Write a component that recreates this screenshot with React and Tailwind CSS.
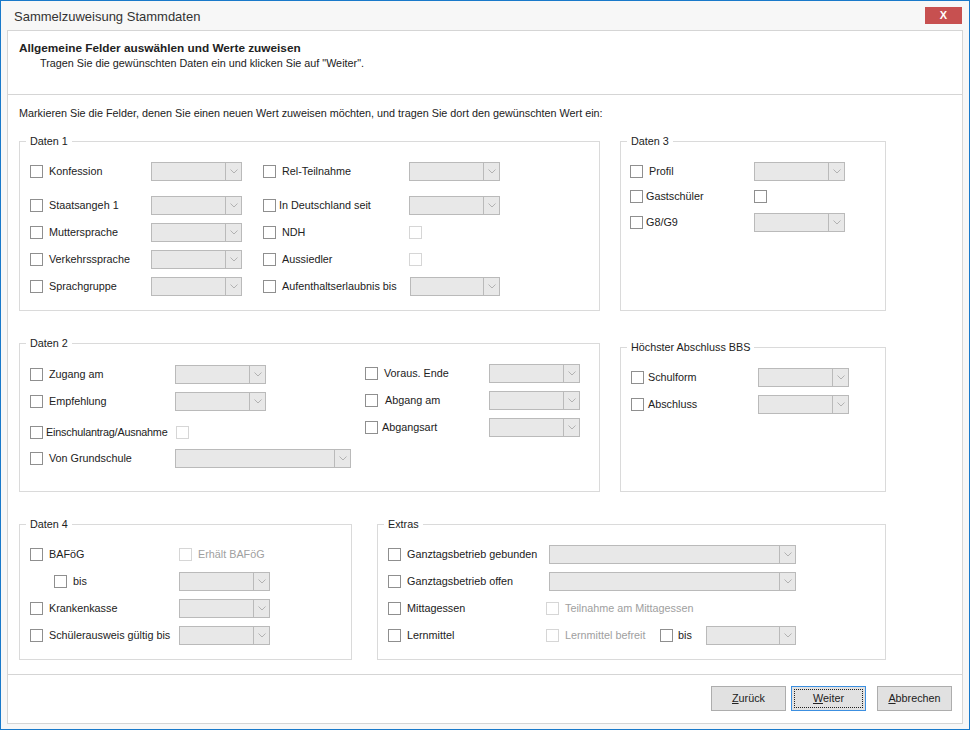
import React from "react";

function Check({ disabled, className = "" }) {
  return (
    <span
      className={`block w-[13px] h-[13px] shrink-0 bg-white border ${
        disabled ? "border-[#d6d6d6]" : "border-[#8f8f8f]"
      } ${className}`}
    />
  );
}

function Combo({ w = "w-[91px]" }) {
  return (
    <div className={`${w} h-[19px] flex shrink-0 border border-[#bababa] bg-[#e8e8e8]`}>
      <div className="flex-1" />
      <div className="w-[16px] border-l border-[#bababa] flex items-center justify-center">
        <svg width="8" height="5" viewBox="0 0 8 5">
          <path d="M0.5 0.5L4 4L7.5 0.5" fill="none" stroke="#b2b2b2" strokeWidth="1" />
        </svg>
      </div>
    </div>
  );
}

// checkbox + label, in a cell of fixed width so the next control lines up
function Field({ w = "", label, gap = "ml-[6px]", disabled }) {
  return (
    <div className={`${w} shrink-0 flex items-center`}>
      <Check disabled={disabled} />
      <span className={`${gap} whitespace-nowrap ${disabled ? "text-[#a0a0a0]" : "text-[#222]"}`}>
        {label}
      </span>
    </div>
  );
}

function Group({ title, className = "", bodyClassName = "", children }) {
  return (
    <div className={`border border-[#dadada] ${className}`}>
      <div className="-mt-[8px] ml-[6px] w-fit px-[4px] bg-white leading-[15px] text-[#222]">{title}</div>
      <div className={bodyClassName}>{children}</div>
    </div>
  );
}

function Row({ className = "", children }) {
  return <div className={`flex items-center h-[19px] ${className}`}>{children}</div>;
}

function Button({ first, rest, focused }) {
  return (
    <div
      className={`w-[75px] h-[25px] p-[2px] bg-[#e1e1e1] border ${
        focused ? "border-[#3c8fe0]" : "border-[#adadad]"
      }`}
    >
      <div
        className={`h-full flex items-center justify-center text-[#222] ${
          focused ? "border border-dotted border-[#222]" : ""
        }`}
      >
        <span>
          <span className="underline">{first}</span>
          {rest}
        </span>
      </div>
    </div>
  );
}

export default function App() {
  return (
    <div className="w-[970px] h-[730px] border border-[#1979ca] bg-[#f7f7f7] flex flex-col font-['Liberation_Sans',Arial,sans-serif] text-[10.8px] leading-[15px]">
      {/* Title bar */}
      <div className="h-[29px] flex items-start shrink-0">
        <div className="pl-[13px] pt-[7px] text-[13px] text-[#333] leading-[17px]">Sammelzuweisung Stammdaten</div>
        <div className="ml-auto mt-[6px] mr-[7px] w-[37px] h-[17px] bg-[#c75050] flex items-center justify-center text-white font-bold text-[11px]">
          X
        </div>
      </div>

      {/* Panel */}
      <div className="mx-[6px] h-[694px] bg-white border border-[#d5d5d5] flex flex-col">
        {/* Header */}
        <div className="h-[64px] shrink-0 border-b border-[#d5d5d5] pl-[11px] pt-[10px]">
          <div className="font-bold text-[11.8px] text-[#222]">Allgemeine Felder auswählen und Werte zuweisen</div>
          <div className="ml-[21px] text-[#222]">Tragen Sie die gewünschten Daten ein und klicken Sie auf "Weiter".</div>
        </div>

        {/* Body */}
        <div className="flex-1 pl-[11px] pt-[11px]">
          <div className="text-[#222]">
            Markieren Sie die Felder, denen Sie einen neuen Wert zuweisen möchten, und tragen Sie dort den gewünschten Wert ein:
          </div>

          {/* Daten 1 / Daten 3 */}
          <div className="flex items-stretch gap-[20px] mt-[20px]">
            <Group title="Daten 1" className="w-[581px]" bodyClassName="pl-[10px] pb-[14px]">
              <Row className="mt-[13px]">
                <Field w="w-[121px]" label="Konfession" />
                <Combo />
                <Field w="w-[146px] ml-[21px]" label="Rel-Teilnahme" />
                <Combo />
              </Row>
              <Row className="mt-[15px]">
                <Field w="w-[121px]" label="Staatsangeh 1" />
                <Combo />
                <Field w="w-[146px] ml-[21px]" label="In Deutschland seit" gap="ml-[3px]" />
                <Combo />
              </Row>
              <Row className="mt-[8px]">
                <Field w="w-[121px]" label="Muttersprache" />
                <Combo />
                <Field w="w-[146px] ml-[21px]" label="NDH" />
                <Check disabled />
              </Row>
              <Row className="mt-[8px]">
                <Field w="w-[121px]" label="Verkehrssprache" />
                <Combo />
                <Field w="w-[146px] ml-[21px]" label="Aussiedler" />
                <Check disabled />
              </Row>
              <Row className="mt-[8px]">
                <Field w="w-[121px]" label="Sprachgruppe" />
                <Combo />
                <Field w="w-[147px] ml-[21px]" label="Aufenthaltserlaubnis bis" />
                <Combo w="w-[90px]" />
              </Row>
            </Group>

            <Group title="Daten 3" className="w-[266px]" bodyClassName="pl-[9px]">
              <Row className="mt-[13px]">
                <Field w="w-[124px]" label="Profil" />
                <Combo />
              </Row>
              <Row className="mt-[6px]">
                <Field w="w-[124px]" label="Gastschüler" gap="ml-[3px]" />
                <Check />
              </Row>
              <Row className="mt-[7px]">
                <Field w="w-[124px]" label="G8/G9" gap="ml-[3px]" />
                <Combo />
              </Row>
            </Group>
          </div>

          {/* Daten 2 / Höchster Abschluss BBS */}
          <div className="flex items-stretch gap-[20px] mt-[32px]">
            <Group title="Daten 2" className="w-[581px]" bodyClassName="pl-[10px] pb-[23px] flex">
              <div className="w-[335px] shrink-0">
                <Row className="mt-[14px]">
                  <Field w="w-[145px]" label="Zugang am" />
                  <Combo />
                </Row>
                <Row className="mt-[8px]">
                  <Field w="w-[145px]" label="Empfehlung" />
                  <Combo />
                </Row>
                <Row className="mt-[12px]">
                  <Field w="w-[146px] tracking-[-0.2px]" label="Einschulantrag/Ausnahme" gap="ml-[3px]" />
                  <Check disabled />
                </Row>
                <Row className="mt-[7px]">
                  <Field w="w-[145px]" label="Von Grundschule" />
                  <Combo w="w-[176px]" />
                </Row>
              </div>
              <div>
                <Row className="mt-[13px]">
                  <Field w="w-[124px]" label="Voraus. Ende" gap="ml-[6px]" />
                  <Combo />
                </Row>
                <Row className="mt-[8px]">
                  <Field w="w-[124px]" label="Abgang am" gap="ml-[7px]" />
                  <Combo />
                </Row>
                <Row className="mt-[8px]">
                  <Field w="w-[124px]" label="Abgangsart" gap="ml-[4px]" />
                  <Combo />
                </Row>
              </div>
            </Group>

            <Group title="Höchster Abschluss BBS" className="w-[266px] mt-[4px]" bodyClassName="pl-[10px]">
              <Row className="mt-[13px]">
                <Field w="w-[127px]" label="Schulform" gap="ml-[4px]" />
                <Combo />
              </Row>
              <Row className="mt-[8px]">
                <Field w="w-[127px]" label="Abschluss" gap="ml-[4px]" />
                <Combo />
              </Row>
            </Group>
          </div>

          {/* Daten 4 / Extras */}
          <div className="flex items-stretch gap-[25px] mt-[32px]">
            <Group title="Daten 4" className="w-[333px]" bodyClassName="pl-[10px] pb-[14px]">
              <Row className="mt-[13px]">
                <Field w="w-[149px]" label="BAFöG" />
                <Field label="Erhält BAFöG" disabled />
              </Row>
              <Row className="mt-[8px]">
                <Field w="w-[125px] ml-[24px]" label="bis" />
                <Combo />
              </Row>
              <Row className="mt-[8px]">
                <Field w="w-[149px]" label="Krankenkasse" />
                <Combo />
              </Row>
              <Row className="mt-[8px]">
                <Field w="w-[149px]" label="Schülerausweis gültig bis" />
                <Combo />
              </Row>
            </Group>

            <Group title="Extras" className="w-[509px]" bodyClassName="pl-[10px] pb-[14px]">
              <Row className="mt-[13px]">
                <Field w="w-[161px]" label="Ganztagsbetrieb gebunden" />
                <Combo w="w-[247px]" />
              </Row>
              <Row className="mt-[8px]">
                <Field w="w-[161px]" label="Ganztagsbetrieb offen" />
                <Combo w="w-[247px]" />
              </Row>
              <Row className="mt-[8px]">
                <Field w="w-[158px]" label="Mittagessen" />
                <Field label="Teilnahme am Mittagessen" disabled />
              </Row>
              <Row className="mt-[8px]">
                <Field w="w-[158px]" label="Lernmittel" />
                <Field w="w-[114px]" label="Lernmittel befreit" disabled />
                <Field w="w-[46px]" label="bis" gap="ml-[5px]" />
                <Combo w="w-[90px]" />
              </Row>
            </Group>
          </div>
        </div>

        {/* Footer */}
        <div className="h-[49px] shrink-0 border-t border-[#d5d5d5] flex justify-end items-start pt-[11px] pr-[10px]">
          <Button first="Z" rest="urück" />
          <div className="ml-[5px]">
            <Button first="W" rest="eiter" focused />
          </div>
          <div className="ml-[11px]">
            <Button first="A" rest="bbrechen" />
          </div>
        </div>
      </div>
    </div>
  );
}
